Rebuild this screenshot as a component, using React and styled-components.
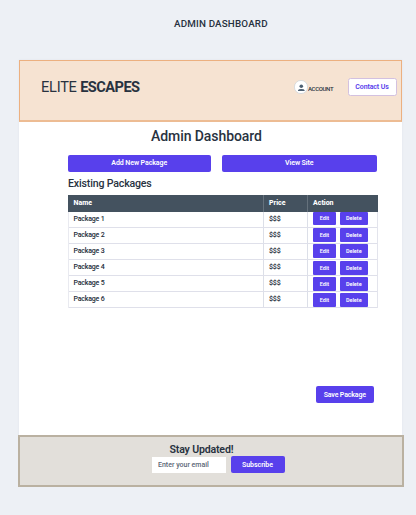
import React from "react";
import styled, { createGlobalStyle } from "styled-components";

const GlobalStyle = createGlobalStyle`
  * { box-sizing: border-box; }
  body { margin: 0; background: #edf0f5; }
`;

const Page = styled.div`
  width: 416px;
  height: 515px;
  overflow: hidden;
  display: flex;
  flex-direction: column;
  background: #edf0f5;
  color: #28323f;
  font-family: Roboto, "Liberation Sans", sans-serif;
`;

const Text = styled.span`
  display: block;
  white-space: nowrap;
  font-size: ${(p) => p.$size}px;
  line-height: ${(p) => p.$line || 12}px;
  font-weight: ${(p) => p.$weight || 500};
  letter-spacing: ${(p) => p.$track || 0}px;
`;

const PageTitle = styled.header`
  height: 60px;
  padding: 17px 0 0 174px;
`;

const Card = styled.main`
  width: 383px;
  height: 375px;
  margin-left: 19px;
  background: #fff;
  box-shadow: 0 0 2px #dfe4ec;
  display: flex;
  flex-direction: column;
`;

const Banner = styled.div`
  height: 62px;
  flex: none;
  display: flex;
  align-items: flex-start;
  background: #f6e3d2;
  border: 1px solid #ecb080;
  border-bottom: 2px solid #edbc93;
`;

const Brand = styled.div`
  display: flex;
  width: 273.5px;
  padding: 16px 0 0 21px;
  gap: 3.5px;
`;

const Account = styled.div`
  display: flex;
  width: 54px;
  padding-top: 19px;
  gap: 0.5px;

  svg { flex: none; }
  span { padding-top: 3px; }
`;

const Button = styled.button`
  display: flex;
  align-items: center;
  justify-content: center;
  flex: none;
  padding: 0;
  font-family: inherit;
  width: ${(p) => p.$w}px;
  height: ${(p) => p.$h || 17}px;
  border: 0;
  border-radius: ${(p) => p.$radius || 2}px;
  background: #5840ec;
  color: #fff;
`;

const OutlineButton = styled(Button)`
  margin-top: 17px;
  border: 1px solid #d3c1e0;
  background: #fff;
  color: #5840ec;
`;

const Content = styled.section`
  display: flex;
  flex-direction: column;
  width: 310px;
  margin-left: 48.5px;
`;

const Heading = styled.div`
  height: 32.5px;
  padding: 4.5px 0 0 83.5px;
`;

const Actions = styled.div`
  display: flex;
  gap: 10.5px;
`;

const SectionTitle = styled.div`
  height: 23px;
  padding: 6px 0 0 0.5px;
`;

const Table = styled.div`
  border-right: 1px solid #e3e4ec;
  border-left: 1px solid #e9eaf0;
`;

const Row = styled.div`
  display: grid;
  grid-template-columns: 195.5px 44px 1fr;
  height: 16px;
  border-bottom: 1px solid #dfe0ea;
  color: #222b38;
`;

const HeadRow = styled(Row)`
  height: 17px;
  margin: 0 -1px;
  padding: 0 1px;
  border: 0;
  background: #44525f;
  color: #fff;
`;

const Cell = styled.div`
  display: flex;
  align-items: center;
  padding-left: 5px;
  border-right: ${(p) => (p.$last ? 0 : 1)}px solid ${(p) => (p.$head ? "#65717c" : "#dcdfe8")};
`;

const ActionCell = styled.div`
  display: flex;
  gap: 4px;
  padding: ${(p) => p.$top}px 0 0 5px;
`;

const SaveBar = styled.div`
  display: flex;
  padding: 78.5px 0 0 248px;
`;

const Footer = styled.footer`
  width: 386px;
  height: 52px;
  margin-left: 18px;
  border: 2px solid #bab1a1;
  background: #e2dfda;
`;

const FooterTitle = styled.div`
  height: 20px;
  padding: 7px 0 0 149.5px;
`;

const SubscribeRow = styled.div`
  display: flex;
  align-items: center;
  gap: 4.5px;
  padding-left: 132px;
  margin-top: -1px;
`;

const EmailField = styled.div`
  display: flex;
  align-items: center;
  width: 74px;
  height: 16px;
  padding-left: 6px;
  background: #fff;
  color: #5b6776;
`;

const AvatarIcon = () => (
  <svg width="14" height="14" viewBox="0 0 14 14">
    <circle cx="7" cy="7" r="6.6" fill="#fff" stroke="#d0d5db" strokeWidth="0.8" />
    <circle cx="7.3" cy="6.3" r="1.8" fill="#4d6073" />
    <path d="M4 11V10.2Q4.3 8.9 7.3 8.9T10.6 10.2V11Z" fill="#4d6073" />
  </svg>
);

const packages = [
  { name: "Package 1", top: 0 },
  { name: "Package 2", top: 0.5 },
  { name: "Package 3", top: 0.5 },
  { name: "Package 4", top: 1.5 },
  { name: "Package 5", top: 1.5 },
  { name: "Package 6", top: 1.5 },
];

export default function App() {
  return (
    <Page>
      <GlobalStyle />
      <PageTitle>
        <Text $size={9.8} $line={14} $weight={500} $track={0.17}>ADMIN DASHBOARD</Text>
      </PageTitle>
      <Card>
        <Banner>
          <Brand>
            <Text $size={14.6} $line={20} $weight={400} $track={-0.25}>ELITE</Text>
            <Text $size={14.6} $line={20} $weight={700} $track={-0.55}>ESCAPES</Text>
          </Brand>
          <Account>
            <AvatarIcon />
            <Text $size={6} $track={-0.35}>ACCOUNT</Text>
          </Account>
          <OutlineButton $w={49} $h={18} $radius={2.5}>
            <Text $size={7} $weight={600} $track={-0.12}>Contact Us</Text>
          </OutlineButton>
        </Banner>
        <Content>
          <Heading>
            <Text $size={14} $line={18} $track={-0.07}>Admin Dashboard</Text>
          </Heading>
          <Actions>
            <Button $w={143.5}><Text $size={7} $weight={600} $track={-0.08}>Add New Package</Text></Button>
            <Button $w={155.5}><Text $size={7} $weight={600} $track={-0.08}>View Site</Text></Button>
          </Actions>
          <SectionTitle>
            <Text $size={10.6} $track={-0.17}>Existing Packages</Text>
          </SectionTitle>
          <Table>
            <HeadRow>
              <Cell $head><Text $size={7} $weight={800}>Name</Text></Cell>
              <Cell $head><Text $size={7} $weight={800}>Price</Text></Cell>
              <Cell $head $last><Text $size={7} $weight={800}>Action</Text></Cell>
            </HeadRow>
            {packages.map((p) => (
              <Row key={p.name}>
                <Cell><Text $size={7} $track={-0.2}>{p.name}</Text></Cell>
                <Cell><Text $size={7} $weight={600} $track={-0.15}>$$$</Text></Cell>
                <ActionCell $top={p.top}>
                  <Button $w={23} $h={13.5} $radius={1}><Text $size={5.5} $weight={600}>Edit</Text></Button>
                  <Button $w={27.5} $h={13.5} $radius={1}><Text $size={5.5} $weight={600}>Delete</Text></Button>
                </ActionCell>
              </Row>
            ))}
          </Table>
          <SaveBar>
            <Button $w={58.5}><Text $size={7} $weight={600} $track={-0.15}>Save Package</Text></Button>
          </SaveBar>
        </Content>
      </Card>
      <Footer>
        <FooterTitle>
          <Text $size={10.6} $weight={600} $track={-0.18}>Stay Updated!</Text>
        </FooterTitle>
        <SubscribeRow>
          <EmailField><Text $size={7}>Enter your email</Text></EmailField>
          <Button $w={54}><Text $size={7} $weight={600} $track={-0.05}>Subscribe</Text></Button>
        </SubscribeRow>
      </Footer>
    </Page>
  );
}
